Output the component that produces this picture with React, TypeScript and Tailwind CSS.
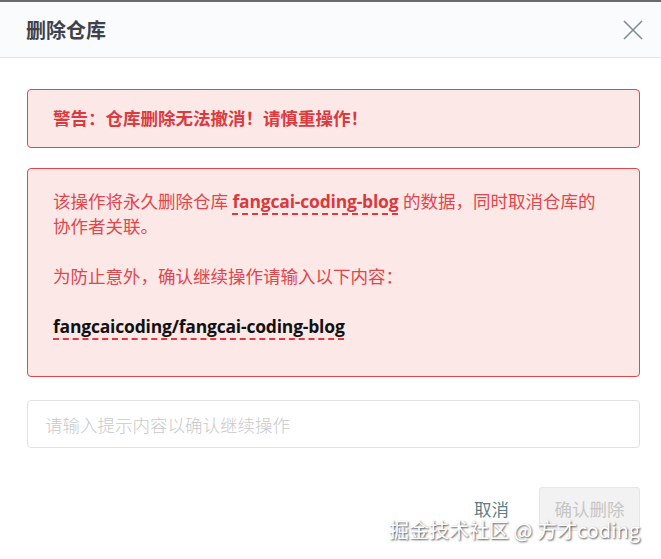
export default function App() {
  return (
    <div className="relative w-[661px] h-[559px] overflow-hidden bg-white font-['Open_Sans','Noto_Sans_CJK_SC',sans-serif]">
      <div className="h-[2px] bg-[#6b6b6b]" />
      <header className="h-[56px] bg-[#fafbfc] border-b border-[#e4e4e4] flex items-center justify-between pl-[26px] pr-[18px]">
        <h2 className="text-[20px] font-bold text-[#3d424c] font-['Noto_Sans_CJK_SC',sans-serif]">删除仓库</h2>
        <button className="w-[20px] h-[20px] mt-[1px] text-[#7f8f8f]">
          <svg viewBox="0 0 20 20" width="20" height="20" fill="none" stroke="currentColor" strokeWidth="1.6">
            <path d="M1 1L19 19M19 1L1 19" />
          </svg>
        </button>
      </header>

      <div className="pl-[27px] pr-[21px] pt-[31px]">
        <div className="h-[59px] flex items-center px-[25px] bg-[#fde8e8] border border-[#e2474b] rounded-[4px]">
          <p className="text-[17.5px] font-bold text-[#dc3a3e] font-['Noto_Sans_CJK_SC',sans-serif]">警告：仓库删除无法撤消！请慎重操作！</p>
        </div>

        <div className="mt-[20px] pt-[20px] pb-[37px] pl-[25px] pr-[40px] bg-[#fde8e8] border border-[#e2474b] rounded-[4px] text-[17.5px] leading-[25px] text-[#e0464b]">
          <p>
            该操作将永久删除仓库{" "}
            <span className="font-bold tracking-[-0.2px] text-[#d93a3e] underline decoration-dashed decoration-[#e3393c] decoration-[1.5px] underline-offset-[5px]">fangcai-coding-blog</span>{" "}
            的数据，同时取消仓库的协作者关联。
          </p>
          <p className="mt-[25px]">为防止意外，确认继续操作请输入以下内容：</p>
          <p className="mt-[25px]">
            <span className="font-bold tracking-[-0.2px] text-[#111] underline decoration-dashed decoration-[#e3393c] decoration-[1.5px] underline-offset-[5px]">fangcaicoding/fangcai-coding-blog</span>
          </p>
        </div>

        <input
          className="mt-[23px] w-full h-[48px] px-[17px] border border-[#e2e2e2] rounded-[4px] text-[17.5px] outline-none placeholder:text-[#c9c9c9] font-['Noto_Sans_CJK_SC',sans-serif] font-light"
          placeholder="请输入提示内容以确认继续操作"
        />

        <div className="mt-[39px] flex justify-end items-center gap-[30px]">
          <button className="text-[17.5px] text-[#5e7f8a] font-['Noto_Sans_CJK_SC',sans-serif]">取消</button>
          <button className="w-[101px] h-[44px] bg-[#f2f2f2] border border-[#e6e6e6] rounded-[3px] text-[17.5px] text-[#c6c6c6] font-['Noto_Sans_CJK_SC',sans-serif]">确认删除</button>
        </div>
      </div>

      <div className="absolute left-[389px] top-[515px] text-[20px] leading-[30px] text-white font-['Noto_Sans_CJK_SC',sans-serif] [text-shadow:1px_1px_2px_rgba(0,0,0,0.7)] whitespace-nowrap">
        掘金技术社区 @ 方才coding
      </div>
    </div>
  );
}
